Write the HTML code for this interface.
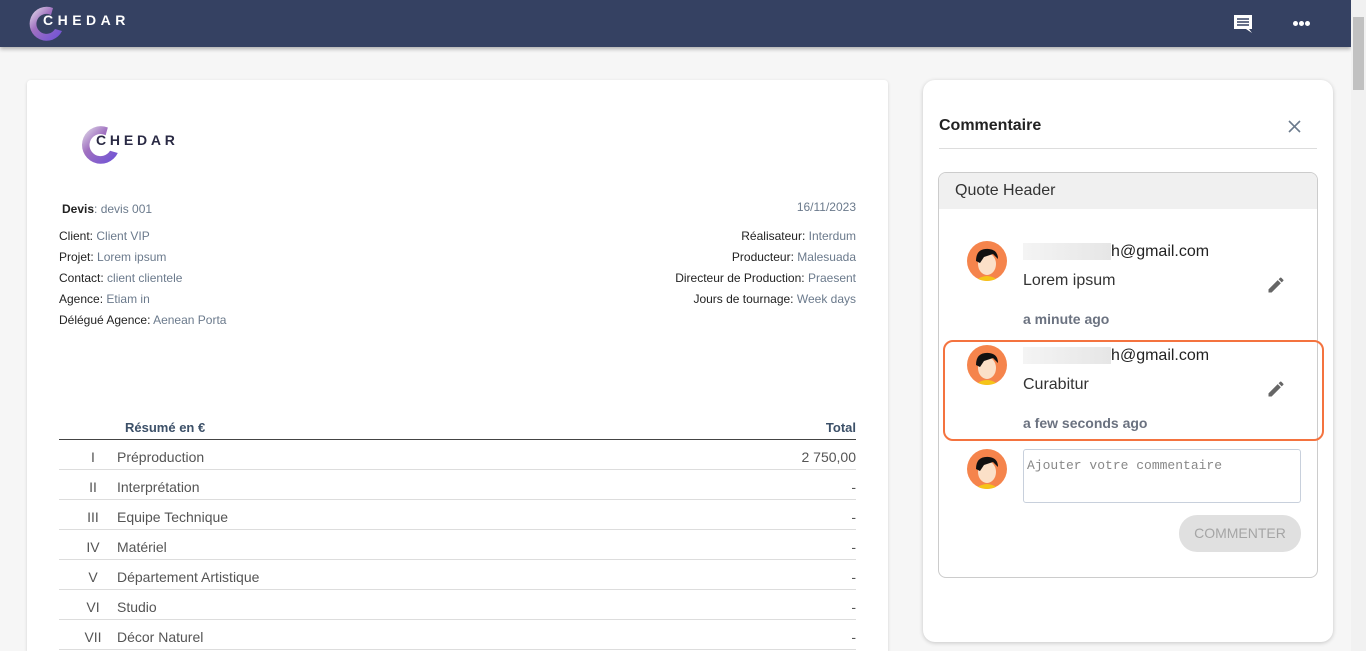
<!DOCTYPE html>
<html><head><meta charset="utf-8"><style>
*{box-sizing:border-box;margin:0;padding:0}
html{width:1366px;height:651px;overflow:hidden}
body{width:1366px;height:651px;overflow:hidden;background:#f6f6f6;font-family:"Liberation Sans",Arial,sans-serif;position:relative;color:#222}
.hdr{position:absolute;left:0;top:0;width:1351px;height:47px;background:#354162;box-shadow:0 2px 4px rgba(0,0,0,.3)}
.sb{position:absolute;right:0;top:0;width:15px;height:651px;background:#f1f1f1}
.sb .th{position:absolute;left:2px;top:17px;width:11px;height:73px;background:#c1c1c1}
.doc{position:absolute;left:27px;top:80px;width:861px;height:571px;background:#fff;border-radius:4px 4px 0 0;box-shadow:0 1px 3px rgba(0,0,0,.15)}
.abs{position:absolute}
.s12{font-size:12px}
.k{color:#222}.v{color:#6b7a8c}
.panel{position:absolute;left:923px;top:80px;width:410px;height:562px;background:#fff;border-radius:12px;box-shadow:0 1px 4px rgba(0,0,0,.2)}
.row{position:absolute;left:59px;width:797px;height:30px;border-bottom:1px solid #ddd;font-size:14px;color:#555}
.row .n{position:absolute;left:0;width:68px;text-align:center;top:9px}
.row .l{position:absolute;left:58px;top:9px}
.row .t{position:absolute;right:0;top:9px}
.av{position:absolute;width:40px;height:40px;border-radius:50%;background:#f5844c;overflow:hidden}
.mask{color:transparent;background:linear-gradient(90deg,#f4f4f4,#e6e6e6)}
</style></head><body>
<svg width="0" height="0" style="position:absolute"><defs><linearGradient id="g" x1="0" y1="0" x2="1" y2="1"><stop offset="0" stop-color="#e8e8ee"/><stop offset=".4" stop-color="#a070c0"/><stop offset="1" stop-color="#6a4fd8"/></linearGradient></defs></svg>
<div class="hdr">
<svg class="abs" style="left:26px;top:3px" width="38" height="38" viewBox="0 0 38 38"><path d="M27 5A17 17 0 1 0 36 28L29 26A10 10 0 1 1 25 12Z" fill="url(#g)"/></svg>
<div class="abs" style="left:43px;top:12px;color:#fff;font-weight:bold;font-size:14px;letter-spacing:4.5px">CHEDAR</div>
<svg class="abs" style="left:1233px;top:14px" width="20" height="20" viewBox="0 0 20 20"><path d="M1 1h18v14h-3l3 4-6-4H1z" fill="#fff"/><path d="M4 5h12M4 8h12M4 11h12" stroke="#354162" stroke-width="1.5"/></svg>
<div class="abs" style="left:1293px;top:21px;width:5px;height:5px;border-radius:50%;background:#fff"></div>
<div class="abs" style="left:1299px;top:21px;width:5px;height:5px;border-radius:50%;background:#fff"></div>
<div class="abs" style="left:1305px;top:21px;width:5px;height:5px;border-radius:50%;background:#fff"></div>
</div>
<div class="sb"><div class="th"></div></div>
<div class="doc">
<svg class="abs" style="left:51px;top:42px" width="42" height="42" viewBox="0 0 38 38"><path d="M27 5A17 17 0 1 0 36 28L29 26A10 10 0 1 1 25 12Z" fill="url(#g)"/></svg>
<div class="abs" style="left:69px;top:52px;color:#2a2a44;font-weight:bold;font-size:14px;letter-spacing:3.8px">CHEDAR</div>
<div class="abs s12" style="left:35px;top:122px"><b>Devis</b><span class="v">: devis 001</span></div>
<div class="abs s12 v" style="right:32px;top:120px">16/11/2023</div>
<div class="abs s12" style="left:32px;top:146px;line-height:21px">
<div><span class="k">Client:</span> <span class="v">Client VIP</span></div>
<div><span class="k">Projet:</span> <span class="v">Lorem ipsum</span></div>
<div><span class="k">Contact:</span> <span class="v">client clientele</span></div>
<div><span class="k">Agence:</span> <span class="v">Etiam in</span></div>
<div><span class="k">Délégué Agence:</span> <span class="v">Aenean Porta</span></div>
</div>
<div class="abs s12" style="right:32px;top:146px;line-height:21px;text-align:right">
<div><span class="k">Réalisateur:</span> <span class="v">Interdum</span></div>
<div><span class="k">Producteur:</span> <span class="v">Malesuada</span></div>
<div><span class="k">Directeur de Production:</span> <span class="v">Praesent</span></div>
<div><span class="k">Jours de tournage:</span> <span class="v">Week days</span></div>
</div>
</div>
<div class="abs" style="left:59px;top:419px;width:797px;height:21px;border-bottom:1px solid #444;font-size:13px;font-weight:bold;color:#3c5068">
<span class="abs" style="left:66px;top:1px">Résumé en €</span><span class="abs" style="right:0;top:1px">Total</span></div>
<div class="row" style="top:440px"><span class="n">I</span><span class="l">Préproduction</span><span class="t">2 750,00</span></div>
<div class="row" style="top:470px"><span class="n">II</span><span class="l">Interprétation</span><span class="t">-</span></div>
<div class="row" style="top:500px"><span class="n">III</span><span class="l">Equipe Technique</span><span class="t">-</span></div>
<div class="row" style="top:530px"><span class="n">IV</span><span class="l">Matériel</span><span class="t">-</span></div>
<div class="row" style="top:560px"><span class="n">V</span><span class="l">Département Artistique</span><span class="t">-</span></div>
<div class="row" style="top:590px"><span class="n">VI</span><span class="l">Studio</span><span class="t">-</span></div>
<div class="row" style="top:620px"><span class="n">VII</span><span class="l">Décor Naturel</span><span class="t">-</span></div>

<div class="panel">
<div class="abs" style="left:16px;top:37px;font-size:16px;font-weight:bold;color:#222">Commentaire</div>
<svg class="abs" style="left:365px;top:40px" width="13" height="13" viewBox="0 0 13 13"><path d="M1 1L12 12M12 1L1 12" stroke="#6b7a8c" stroke-width="1.6"/></svg>
<div class="abs" style="left:16px;top:68px;width:378px;border-top:1px solid #ddd"></div>
<div class="abs" style="left:15px;top:92px;width:380px;height:406px;border:1px solid #ccc;border-radius:8px;overflow:hidden">
<div style="height:36px;background:#f0f0f0;font-size:16px;color:#333;padding:9px 0 0 16px">Quote Header</div>
</div>
</div>
<div class="abs" style="left:943px;top:340px;width:381px;height:101px;border:2px solid #f4733f;border-radius:10px"></div>

<div class="av" style="left:967px;top:241px"><svg width="40" height="40" viewBox="0 0 40 40"><path d="M8 40q12-10 24 0" fill="#f5c518"/><ellipse cx="20" cy="23" rx="9" ry="11" fill="#fbe0c8"/><path d="M9 20q0-13 13-12q9 1 9 10l-5-5-9 3-4 6z" fill="#111"/></svg></div>
<div class="abs" style="left:1023px;top:243px;font-size:16px;color:#222"><span class="mask">jammonante</span>h@gmail.com</div>
<div class="abs" style="left:1023px;top:272px;font-size:16px;color:#333">Lorem ipsum</div>
<div class="abs" style="left:1023px;top:311px;font-size:14px;font-weight:bold;color:#6b7280">a minute ago</div>
<svg class="abs" style="left:1266px;top:275px" width="20" height="20" viewBox="0 0 24 24"><path d="M3 17.25V21h3.75L17.81 9.94l-3.75-3.75L3 17.25zM20.71 7.04a1 1 0 000-1.41l-2.34-2.34a1 1 0 00-1.41 0l-1.83 1.83 3.75 3.75 1.83-1.83z" fill="#666"/></svg>

<div class="av" style="left:967px;top:345px"><svg width="40" height="40" viewBox="0 0 40 40"><path d="M8 40q12-10 24 0" fill="#f5c518"/><ellipse cx="20" cy="23" rx="9" ry="11" fill="#fbe0c8"/><path d="M9 20q0-13 13-12q9 1 9 10l-5-5-9 3-4 6z" fill="#111"/></svg></div>
<div class="abs" style="left:1023px;top:347px;font-size:16px;color:#222"><span class="mask">jammonante</span>h@gmail.com</div>
<div class="abs" style="left:1023px;top:376px;font-size:16px;color:#333">Curabitur</div>
<div class="abs" style="left:1023px;top:415px;font-size:14px;font-weight:bold;color:#6b7280">a few seconds ago</div>
<svg class="abs" style="left:1266px;top:379px" width="20" height="20" viewBox="0 0 24 24"><path d="M3 17.25V21h3.75L17.81 9.94l-3.75-3.75L3 17.25zM20.71 7.04a1 1 0 000-1.41l-2.34-2.34a1 1 0 00-1.41 0l-1.83 1.83 3.75 3.75 1.83-1.83z" fill="#666"/></svg>

<div class="av" style="left:967px;top:449px"><svg width="40" height="40" viewBox="0 0 40 40"><path d="M8 40q12-10 24 0" fill="#f5c518"/><ellipse cx="20" cy="23" rx="9" ry="11" fill="#fbe0c8"/><path d="M9 20q0-13 13-12q9 1 9 10l-5-5-9 3-4 6z" fill="#111"/></svg></div>
<div class="abs" style="left:1023px;top:449px;width:278px;height:54px;border:1px solid #c8d0dc;border-radius:3px;font-family:'Liberation Mono',monospace;font-size:13px;color:#888;padding:8px 3px">Ajouter votre commentaire</div>
<div class="abs" style="left:1179px;top:515px;width:122px;height:37px;border-radius:18px;background:#e0e0e0;color:#a5a5a5;font-size:14px;text-align:center;line-height:37px">COMMENTER</div>
</body></html>
